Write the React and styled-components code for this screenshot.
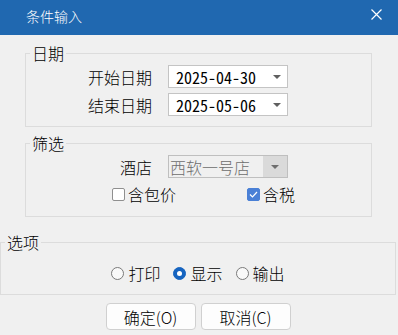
import React from 'react';
import styled, { createGlobalStyle } from 'styled-components';

const GlobalStyle = createGlobalStyle`
  html, body { margin: 0; padding: 0; background: #f0f0f0; }
  body { font-family: "Noto Sans CJK SC", "Noto Sans", sans-serif; font-weight: 300; color: #000; }
`;

const Dialog = styled.div`
  width: 398px;
  height: 335px;
  overflow: hidden;
  background: #f0f0f0;
  display: flex;
  flex-direction: column;
`;

const TitleBar = styled.div`
  height: 35px;
  flex: none;
  box-sizing: border-box;
  background: #2068b0;
  display: flex;
  align-items: center;
  justify-content: space-between;
  padding: 0 16px 4px 26px;
`;

const Title = styled.span`
  color: #fff;
  font-size: 14px;
  line-height: 18px;
`;

const CloseIcon = styled.svg`
  display: block;
  margin-bottom: 2px;
`;

const Group = styled.fieldset`
  margin: ${(p) => p.$top}px 0 0 ${(p) => p.$left}px;
  width: ${(p) => p.$width}px;
  min-width: 0;
  box-sizing: border-box;
  border: 1px solid #dcdcdc;
  padding: ${(p) => p.$pt}px 4px ${(p) => p.$pb}px 4px;
`;

const Legend = styled.legend`
  padding: 0 2px;
  font-size: 16px;
  line-height: 18px;
`;

const Stack = styled.div`
  display: flex;
  flex-direction: column;
  gap: ${(p) => p.$gap}px;
`;

const FieldRow = styled.div`
  display: flex;
  align-items: center;
  gap: 16px;
`;

const FieldLabel = styled.span`
  width: 122px;
  text-align: right;
  font-size: 16px;
  line-height: 18px;
`;

const Combo = styled.div`
  width: 120px;
  height: 23px;
  box-sizing: border-box;
  border: 1px solid ${(p) => (p.$disabled ? '#bfbfbf' : '#c4c4c4')};
  background: ${(p) => (p.$disabled ? '#f0f0f0' : '#ffffff')};
  display: flex;
  align-items: center;
`;

const ComboText = styled.span`
  flex: 1;
  padding-left: 7px;
  font-family: "Noto Sans Mono CJK SC", "Liberation Mono", monospace;
  font-weight: 300;
  font-size: 16px;
  line-height: 18px;
  color: #000;
`;

const DisabledText = styled.span`
  flex: 1;
  padding-left: 1px;
  font-size: 16px;
  line-height: 18px;
  color: #6d6d6d;
`;

const Arrow = styled.svg`
  display: block;
  margin-right: ${(p) => p.$mr || 0}px;
`;

const DropButton = styled.div`
  width: 24px;
  align-self: stretch;
  background: #dadada;
  display: flex;
  align-items: center;
  justify-content: center;
`;

const CheckRow = styled.div`
  display: flex;
  align-items: center;
  height: 18px;
  padding-left: 82px;
`;

const CheckItem = styled.label`
  display: flex;
  align-items: center;
  gap: 3px;
  font-size: 16px;
  line-height: 18px;
  margin-left: ${(p) => p.$ml || 0}px;
`;

const Box = styled.span`
  width: 13px;
  height: 13px;
  box-sizing: border-box;
  border-radius: 2px;
  border: 1px solid ${(p) => (p.$checked ? '#4a80d6' : '#8f8f8f')};
  background: ${(p) => (p.$checked ? '#4a80d6' : '#ffffff')};
  display: flex;
  align-items: center;
  justify-content: center;
`;

const RadioRow = styled.div`
  display: flex;
  justify-content: center;
  align-items: center;
  gap: 13px;
  height: 18px;
`;

const RadioItem = styled.label`
  display: flex;
  align-items: center;
  gap: 4px;
  font-size: 16px;
  line-height: 18px;
`;

const RadioDot = styled.span`
  width: 13px;
  height: 13px;
  box-sizing: border-box;
  border-radius: 50%;
  border: 1px solid ${(p) => (p.$checked ? '#1664c0' : '#7a7a7a')};
  background: ${(p) => (p.$checked ? '#1664c0' : '#f9f9f9')};
  display: flex;
  align-items: center;
  justify-content: center;
  &::after {
    content: '';
    display: ${(p) => (p.$checked ? 'block' : 'none')};
    width: 5px;
    height: 5px;
    border-radius: 50%;
    background: #fff;
  }
`;

const ButtonRow = styled.div`
  display: flex;
  justify-content: center;
  gap: 5px;
  margin-top: 8px;
  padding-right: 2px;
`;

const Button = styled.button`
  width: 90px;
  height: 27px;
  box-sizing: border-box;
  border: 1px solid #d0d0d0;
  border-radius: 4px;
  background: #fdfdfd;
  font-family: "Noto Sans CJK SC", sans-serif;
  font-weight: 300;
  font-size: 16px;
  line-height: 18px;
  color: #000;
  padding: 0;
`;

const DateCombo = ({ value }) => (
  <Combo>
    <ComboText>{value}</ComboText>
    <Arrow $mr={6} width="8" height="4" viewBox="0 0 8 4">
      <path d="M0 0 H8 L4 4 Z" fill="#5f5f5f" />
    </Arrow>
  </Combo>
);

export default function App() {
  return (
    <>
      <GlobalStyle />
      <Dialog>
        <TitleBar>
          <Title>条件输入</Title>
          <CloseIcon width="11" height="11" viewBox="0 0 11 11">
            <path d="M0.5 0.5 L10.5 10.5 M10.5 0.5 L0.5 10.5" stroke="#fff" strokeWidth="1.2" />
          </CloseIcon>
        </TitleBar>

        <Group $top={9} $left={25} $width={347} $pt={3} $pb={10}>
          <Legend>日期</Legend>
          <Stack $gap={5}>
            <FieldRow>
              <FieldLabel>开始日期</FieldLabel>
              <DateCombo value="2025-04-30" />
            </FieldRow>
            <FieldRow>
              <FieldLabel>结束日期</FieldLabel>
              <DateCombo value="2025-05-06" />
            </FieldRow>
          </Stack>
        </Group>

        <Group $top={7} $left={25} $width={347} $pt={3} $pb={13}>
          <Legend>筛选</Legend>
          <Stack $gap={7}>
            <FieldRow>
              <FieldLabel>酒店</FieldLabel>
              <Combo $disabled>
                <DisabledText>西软一号店</DisabledText>
                <DropButton>
                  <Arrow width="8" height="4" viewBox="0 0 8 4">
                    <path d="M0 0 H8 L4 4 Z" fill="#6e6e6e" />
                  </Arrow>
                </DropButton>
              </Combo>
            </FieldRow>
            <CheckRow>
              <CheckItem>
                <Box />
                含包价
              </CheckItem>
              <CheckItem $ml={71}>
                <Box $checked>
                  <svg width="9" height="7" viewBox="0 0 9 7">
                    <path d="M1 3.5 L3.5 6 L8 1" stroke="#fff" strokeWidth="1.2" fill="none" />
                  </svg>
                </Box>
                含税
              </CheckItem>
            </CheckRow>
          </Stack>
        </Group>

        <Group $top={16} $left={0} $width={396} $pt={13} $pb={12}>
          <Legend>选项</Legend>
          <RadioRow>
            <RadioItem>
              <RadioDot />
              打印
            </RadioItem>
            <RadioItem>
              <RadioDot $checked />
              显示
            </RadioItem>
            <RadioItem>
              <RadioDot />
              输出
            </RadioItem>
          </RadioRow>
        </Group>

        <ButtonRow>
          <Button>确定(O)</Button>
          <Button>取消(C)</Button>
        </ButtonRow>
      </Dialog>
    </>
  );
}
